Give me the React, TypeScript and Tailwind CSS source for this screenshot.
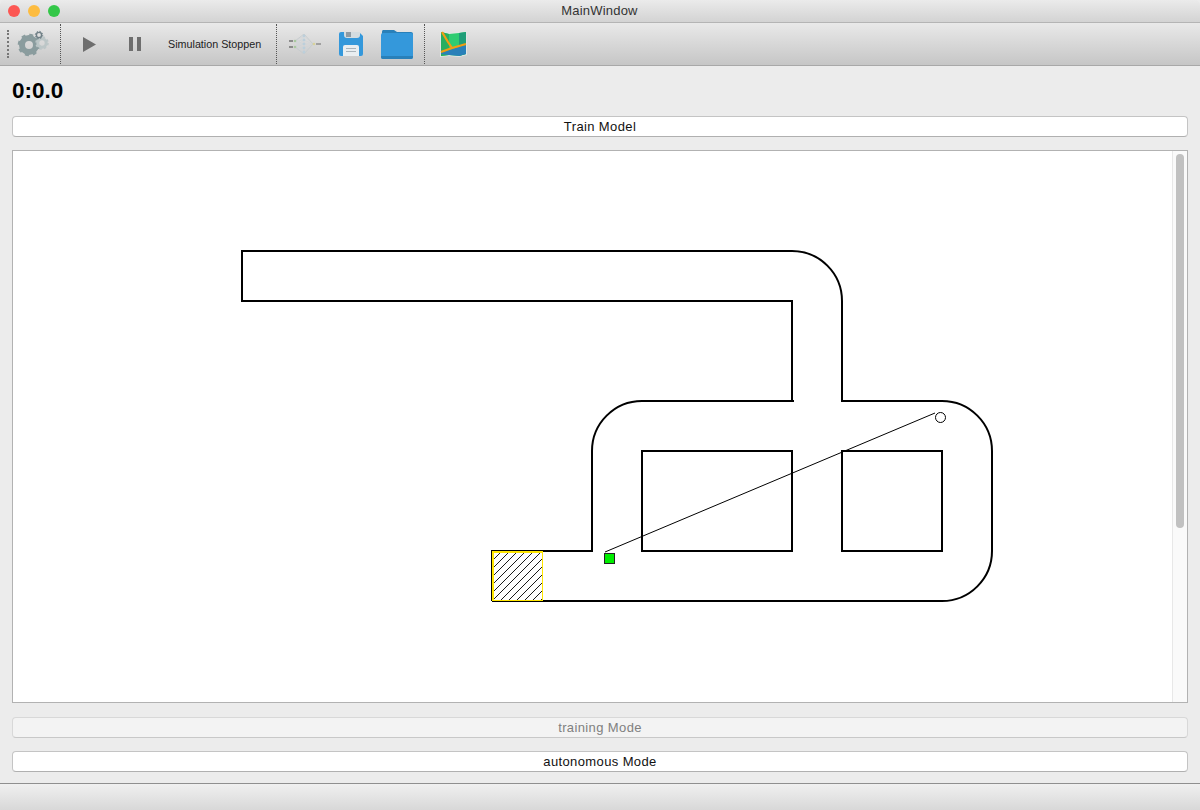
import React from "react";

const Sep = () => <div className="w-px h-[40px] border-l border-dotted border-[#555]" />;

function Gears() {
  return (
    <svg width="34" height="34" viewBox="0 0 34 34">
      <circle cx="13" cy="18" r="7" fill="none" stroke="#8a9c9e" strokeWidth="6" />
      <circle cx="13" cy="18" r="10" fill="none" stroke="#8a9c9e" strokeWidth="2.5" strokeDasharray="3.93 3.92" />
      <circle cx="26" cy="16" r="4.2" fill="none" stroke="#bcc6c7" strokeWidth="3" />
      <circle cx="26" cy="16" r="6" fill="none" stroke="#bcc6c7" strokeWidth="1.5" strokeDasharray="2.35 2.36" />
      <circle cx="23" cy="8" r="2.6" fill="none" stroke="#6f7f86" strokeWidth="1.4" />
      <circle cx="23" cy="8" r="3.7" fill="none" stroke="#6f7f86" strokeWidth="1" strokeDasharray="1.45 1.45" />
    </svg>
  );
}

function Net() {
  const left = [[6, 7], [6, 13]];
  const mid = [[15, 2], [15, 6], [15, 10], [15, 14], [15, 18]];
  const right = [24, 10];
  return (
    <svg width="32" height="20" viewBox="0 0 32 20">
      {left.flatMap((a, i) => mid.map((b, j) => <line key={`a${i}${j}`} x1={a[0]} y1={a[1]} x2={b[0]} y2={b[1]} stroke="#ccd2d6" strokeWidth="0.5" />))}
      {mid.map((b, j) => <line key={`b${j}`} x1={b[0]} y1={b[1]} x2={right[0]} y2={right[1]} stroke="#ccd2d6" strokeWidth="0.5" />)}
      <path d="M6 7 L15 0 L24 10 L15 20 L6 13" fill="none" stroke="#c4cacd" strokeWidth="0.8" />
      {mid.map((b, i) => <circle key={i} cx={b[0]} cy={b[1]} r="1.4" fill="#bccfdb" />)}
      <rect x="0" y="6" width="4" height="2" fill="#8b8b8b" />
      <rect x="0" y="12" width="4" height="2" fill="#8b8b8b" />
      <circle cx="6" cy="7" r="1.3" fill="#a9c9a0" />
      <circle cx="6" cy="13" r="1.3" fill="#a9c9a0" />
      <circle cx="25" cy="10" r="1.3" fill="#d8d29a" />
      <rect x="27" y="9" width="5" height="2" fill="#a0a0a0" />
    </svg>
  );
}

function Floppy() {
  return (
    <svg width="24" height="24" viewBox="0 0 24 24">
      <path d="M2 0 H20 L24 4 V22 a2 2 0 0 1 -2 2 H2 a2 2 0 0 1 -2 -2 V2 a2 2 0 0 1 2 -2 Z" fill="#3498db" />
      <path d="M5 0 H21 V3 a3 3 0 0 1 -3 3 H8 a3 3 0 0 1 -3 -3 Z" fill="#d4dce0" />
      <rect x="7" y="0" width="5" height="5" fill="#8f9ba3" />
      <path d="M4 15 a2 2 0 0 1 2 -2 H18 a2 2 0 0 1 2 2 V24 H4 Z" fill="#e9eef1" />
      <rect x="7" y="16" width="10" height="1" fill="#a9b4bb" />
      <rect x="7" y="19" width="10" height="1" fill="#a9b4bb" />
    </svg>
  );
}

function Folder() {
  return (
    <svg width="33" height="31" viewBox="0 0 33 31">
      <path d="M2 1 H13 L16 3 H30 a2 2 0 0 1 2 2 V8 H1 V3 a2 2 0 0 1 1 -2 Z" fill="#2980b9" />
      <path d="M2 4 H30 a2 2 0 0 1 2 2 V28 a2 2 0 0 1 -2 2 H2 a2 2 0 0 1 -2 -2 V6 a2 2 0 0 1 2 -2 Z" fill="#3498db" />
      <path d="M0 27 V28 a2 2 0 0 0 2 2 H30 a2 2 0 0 0 2 -2 V27 Z" fill="#2980b9" />
    </svg>
  );
}

function MapIcon() {
  return (
    <svg width="28" height="27" viewBox="0 0 28 27">
      <path d="M0 0 L9 2 L19 1 L27 0 V24 L19 26 L9 25 L0 26 Z" fill="#e2e7e5" />
      <path d="M1 1 L9 3 L19 2 L26 1 V23 L19 25 L9 24 L1 25 Z" fill="#2ecc71" />
      <path d="M1 1 L9 3 V24 L1 25 Z" fill="#27ae60" />
      <path d="M19 2 L26 1 V23 L19 25 Z" fill="#1f9e78" />
      <path d="M1 23 L9 24 L19 25 L26 23 V14 L19 16 L12 18 L1 22 Z" fill="#2980b9" />
      <path d="M1 21 L12 17 L26 13" fill="none" stroke="#f39c12" strokeWidth="2.2" />
      <path d="M2 1 L8 11 L12 17" fill="none" stroke="#f39c12" strokeWidth="2.2" />
    </svg>
  );
}

const btn = "w-full h-[21px] flex items-center justify-center rounded-[4px] border border-[#c4c4c4] border-b-[#b0b0b0] text-[13px] tracking-[0.38px]";

export default function App() {
  return (
    <div className="w-[1200px] h-[810px] flex flex-col overflow-hidden bg-[#ececec] font-['Liberation_Sans',Arial,sans-serif]">
      <div className="h-[22px] flex items-center justify-center relative bg-gradient-to-b from-[#ebebeb] to-[#d3d3d3] rounded-t-[5px]">
        <div className="absolute left-[8px] top-[5px] flex gap-[8px]">
          <div className="w-[12px] h-[12px] rounded-full bg-[#fc5753]" />
          <div className="w-[12px] h-[12px] rounded-full bg-[#fdbc40]" />
          <div className="w-[12px] h-[12px] rounded-full bg-[#33c748]" />
        </div>
        <span className="text-[13px] text-[#333] tracking-[0.2px] pr-[1px]">MainWindow</span>
      </div>
      <div className="h-[44px] flex items-center border-t border-b border-t-[#b4b4b4] border-b-[#a8a8a8] bg-gradient-to-b from-[#e9e9e9] to-[#c6c6c6]">
        <div className="w-[2px] h-[28px] ml-[7px] border-l-2 border-dotted border-[#777]" />
        <div className="w-[34px] h-[34px] ml-[7px] flex items-center justify-center"><Gears /></div>
        <div className="ml-[10px]"><Sep /></div>
        <svg className="ml-[22px]" width="13" height="15" viewBox="0 0 13 15"><path d="M0 0 L13 7.5 L0 15 Z" fill="#6e6e6e" /></svg>
        <svg className="ml-[33px]" width="13" height="14" viewBox="0 0 13 14"><rect x="0" y="0" width="4" height="14" fill="#6e6e6e" /><rect x="8" y="0" width="4" height="14" fill="#6e6e6e" /></svg>
        <span className="ml-[26px] w-[108px] pt-[1px] text-[10.75px] text-[#222] whitespace-nowrap">Simulation Stoppen</span>
        <Sep />
        <div className="ml-[12px] w-[32px] h-[20px]"><Net /></div>
        <div className="ml-[18px]"><Floppy /></div>
        <div className="ml-[18px] mt-[1px]"><Folder /></div>
        <div className="ml-[10px]"><Sep /></div>
        <div className="ml-[15px] mt-[1px]"><MapIcon /></div>
      </div>
      <div className="flex-1 px-[12px] flex flex-col">
        <div className="h-[50px] flex items-center text-[22.5px] font-bold text-black">0:0.0</div>
        <button className={`${btn} bg-white text-[#111]`}>Train Model</button>
        <div className="mt-[13px] h-[553px] border border-[#b2b2b2] bg-white flex">
          <div className="flex-1 min-w-0">
            <svg className="block" width="1159" height="551" viewBox="13 151 1159 551">
              <defs>
                <pattern id="hatch" width="8" height="8" patternUnits="userSpaceOnUse" patternTransform="translate(493 552)">
                  <line x1="0" y1="8" x2="8" y2="0" stroke="#000" strokeWidth="0.9" shapeRendering="crispEdges" />
                </pattern>
              </defs>
              <rect x="493" y="552" width="49" height="48" fill="url(#hatch)" />
              <g fill="none" stroke="#000" strokeWidth="2">
                <path d="M492 601 V551 H592 V451 A50 50 0 0 1 642 401 H792 V301 H242 V251 H792 A50 50 0 0 1 842 301 V401 H942 A50 50 0 0 1 992 451 V551 A50 50 0 0 1 942 601 H492" />
                <path d="M792 401 H794" />
                <rect x="642" y="451" width="150" height="100" />
                <rect x="842" y="451" width="100" height="100" />
              </g>
              <rect x="493" y="552" width="49.5" height="48.5" fill="none" stroke="#ffe600" strokeWidth="1.5" shapeRendering="crispEdges" />
              <line x1="605" y1="552" x2="935" y2="413" stroke="#000" strokeWidth="1" />
              <circle cx="940.5" cy="417.5" r="5" fill="#fff" stroke="#000" strokeWidth="1" />
              <rect x="604.5" y="553.5" width="10" height="10" fill="#00ee00" stroke="#222" strokeWidth="1" />
            </svg>
          </div>
          <div className="w-[15px] h-full bg-[#fafafa] border-l border-[#e8e8e8] pl-[3px] pt-[3px]">
            <div className="w-[8px] h-[374px] rounded-full bg-[#c1c1c1]" />
          </div>
        </div>
        <button className={`${btn} mt-[14px] bg-[#f3f3f3] text-[#808080] border-[#d8d8d8] border-b-[#c8c8c8]`}>training Mode</button>
        <button className={`${btn} mt-[13px] bg-white text-[#111]`}>autonomous Mode</button>
      </div>
      <div className="h-[27px] border-t border-[#8f8f8f] bg-gradient-to-b from-[#f0f0f0] to-[#d8d8d8]" />
    </div>
  );
}
